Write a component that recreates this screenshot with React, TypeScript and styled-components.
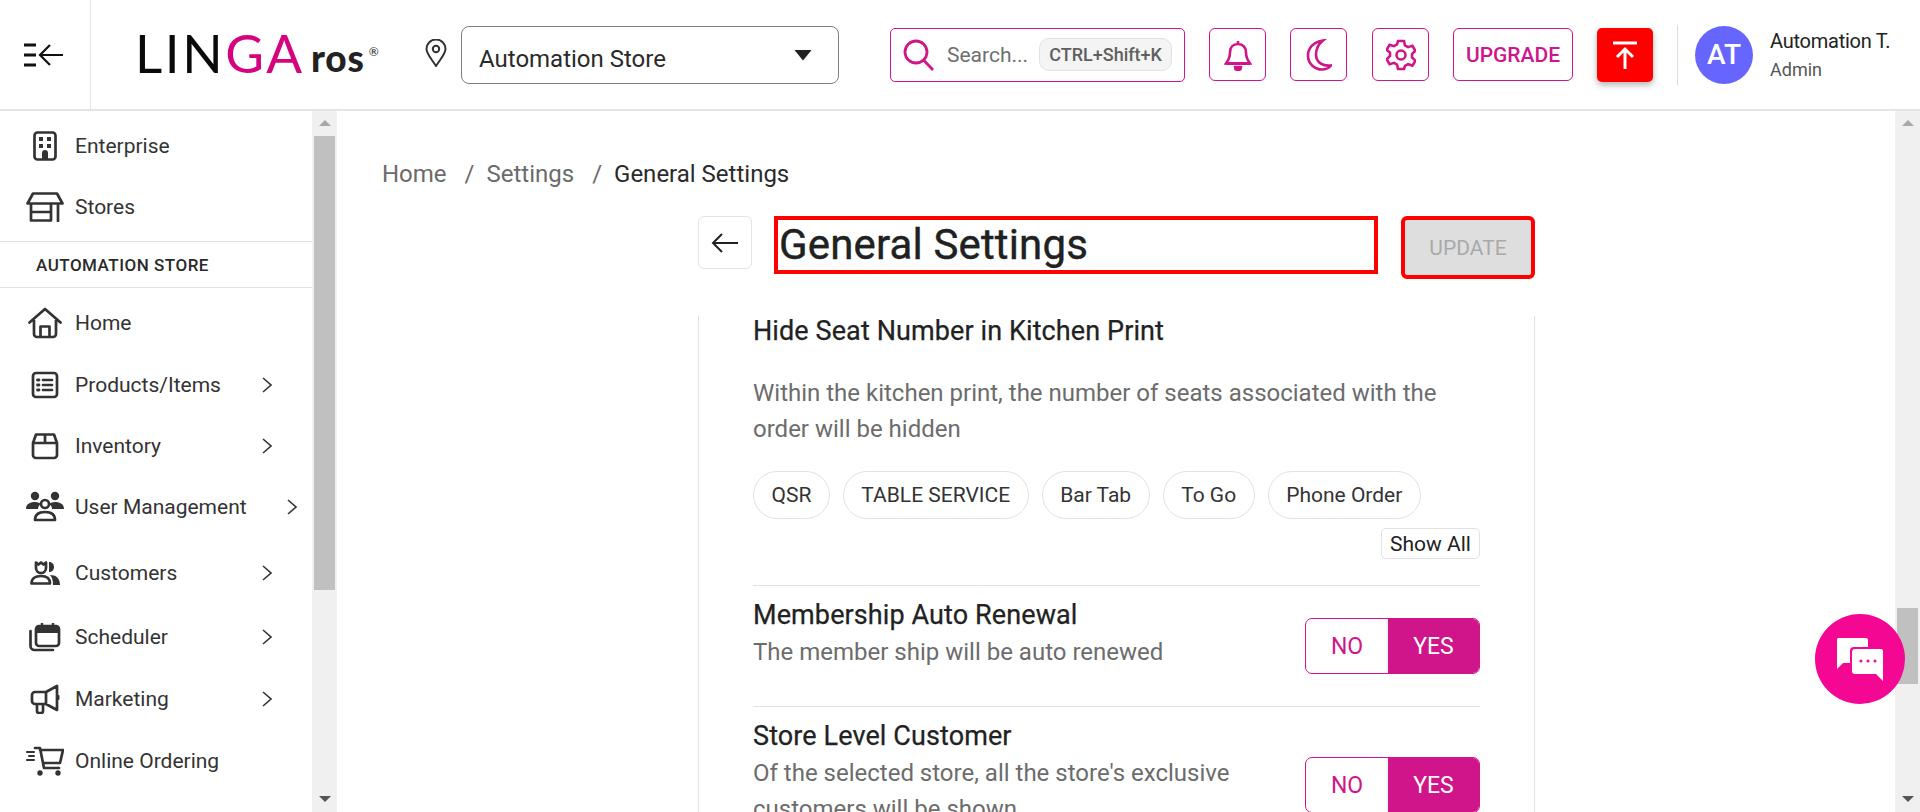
import React from "react";
import styled, { createGlobalStyle } from "styled-components";

const PINK = "#d0158a";
const INK = "#2a2a2a";

const Global = createGlobalStyle`
  html, body { margin: 0; padding: 0; height: 100%; overflow: hidden; background: #fff; }
  body { font-family: Roboto, "Liberation Sans", sans-serif; color: ${INK}; }
  * { box-sizing: border-box; }
`;

const Page = styled.div`
  width: 1920px;
  height: 812px;
  display: flex;
  flex-direction: column;
  overflow: hidden;
  position: relative;
`;

/* header */
const Header = styled.header`
  height: 111px;
  flex: none;
  display: flex;
  align-items: center;
  border-bottom: 2px solid #e4e4e4;
`;
const MenuCell = styled.div`
  width: 91px;
  height: 109px;
  flex: none;
  border-right: 1px solid #e4e4e4;
  display: flex;
  align-items: center;
  padding-left: 23px;
`;
const Logo = styled.div`
  width: 290px;
  margin-left: 44px;
  flex: none;
  display: flex;
  align-items: baseline;
  font-family: Lato, sans-serif;
  color: #0a0a0a;
  margin-top: -2px;
`;
const LogoMark = styled.span`
  font-size: 53px;
  font-weight: 400;
  letter-spacing: 2.6px;
  line-height: 1;
  width: 176px;
  b { font-weight: 400; color: #d6037f; }
`;
const LogoSuffix = styled.span`
  font-size: 37px;
  font-weight: 900;
  color: #222;
  letter-spacing: 0.8px;
  transform: translateY(-1px);
`;
const LogoMarkR = styled.sup`
  font-size: 12px;
  font-weight: 400;
  margin-left: 4px;
  vertical-align: 16px;
  line-height: 0;
`;
const PinSlot = styled.div`
  width: 36px;
  flex: none;
  display: flex;
  margin-top: -3px;
`;
const StoreSelect = styled.div`
  width: 378px;
  height: 58px;
  flex: none;
  border: 1px solid #7b7f88;
  border-radius: 8px;
  display: flex;
  align-items: center;
  justify-content: space-between;
  padding: 9px 26px 0 17px;
  font-size: 24px;
  margin-right: 51px;
`;
const Caret = styled.span`
  width: 18px;
  height: 11px;
  margin-top: -8px;
  background: #222;
  clip-path: polygon(0 0, 100% 0, 50% 100%);
`;
const SearchBox = styled.div`
  width: 295px;
  height: 54px;
  flex: none;
  border: 1px solid ${PINK};
  border-radius: 5px;
  display: flex;
  align-items: center;
  padding-left: 12px;
  margin-right: 24px;
`;
const SearchText = styled.span`
  font-size: 21px;
  color: #6f6f6f;
  margin-left: 12px;
`;
const Kbd = styled.span`
  margin-left: 11px;
  height: 33px;
  width: 133px;
  flex: none;
  border-radius: 10px;
  border: 1px solid #e2e2e2;
  background: #f4f4f4;
  font-size: 18px;
  font-weight: 500;
  color: #5f5f5f;
  display: flex;
  align-items: center;
  justify-content: center;
`;
const IconButton = styled.div<{ $gap?: number }>`
  width: 57px;
  height: 53px;
  flex: none;
  border: 1px solid ${PINK};
  border-radius: 6px;
  display: flex;
  align-items: center;
  justify-content: center;
  margin-right: ${p => p.$gap ?? 24}px;
`;
const UpgradeButton = styled(IconButton)`
  width: 120px;
  font-size: 21px;
  font-weight: 500;
  color: ${PINK};
`;
const RedButton = styled.div`
  width: 56px;
  height: 54px;
  flex: none;
  background: #ff0000;
  border-radius: 5px;
  box-shadow: 0 3px 6px rgba(0, 0, 0, 0.3);
  display: flex;
  align-items: center;
  justify-content: center;
`;
const VSep = styled.div`
  width: 1px;
  height: 60px;
  flex: none;
  background: #dcdcdc;
  margin: 0 17px 0 24px;
`;
const Avatar = styled.div`
  width: 58px;
  height: 58px;
  flex: none;
  border-radius: 50%;
  background: #6666ff;
  color: #fff;
  font-size: 28px;
  font-weight: 500;
  display: flex;
  align-items: center;
  justify-content: center;
`;
const UserInfo = styled.div`
  margin-left: 17px;
  display: flex;
  flex-direction: column;
  gap: 6px;
`;
const UserName = styled.span`
  font-size: 20px;
  line-height: 24px;
  color: #222;
  letter-spacing: -0.25px;
`;
const UserRole = styled.span`
  font-size: 18px;
  line-height: 22px;
  color: #555;
`;

/* body */
const Body = styled.div`
  flex: 1;
  min-height: 0;
  display: flex;
`;
const Sidebar = styled.aside`
  width: 337px;
  flex: none;
  display: flex;
  border-right: 1px solid #e4e4e4;
`;
const SideList = styled.nav`
  width: 312px;
  flex: none;
  padding-top: 5px;
  overflow: hidden;
`;
const SideRow = styled.div<{ $h: number }>`
  height: ${p => p.$h}px;
  display: flex;
  align-items: center;
  padding-left: 26px;
  font-size: 21px;
  color: #333;
`;
const SideIcon = styled.span`
  width: 38px;
  height: 32px;
  margin-right: 11px;
  display: flex;
  align-items: center;
  justify-content: center;
  flex: none;
`;
const SideLabel = styled.span<{ $w?: number }>`
  min-width: ${p => p.$w ?? 187}px;
`;
const StoreHeading = styled.div`
  height: 47px;
  margin-top: 4px;
  border-top: 1px solid #e2e2e2;
  border-bottom: 1px solid #e2e2e2;
  padding-left: 36px;
  display: flex;
  align-items: center;
  font-size: 17px;
  font-weight: 500;
  color: #2a2a2a;
  letter-spacing: 0.5px;
`;
const Track = styled.div`
  width: 25px;
  flex: none;
  background: #f0f0f0;
  display: flex;
  flex-direction: column;
  align-items: center;
  position: relative;
`;
const ArrowUp = styled.span`
  margin-top: 9px;
  width: 0;
  height: 0;
  border-left: 6px solid transparent;
  border-right: 6px solid transparent;
  border-bottom: 6px solid #a8a8a8;
`;
const ArrowDown = styled.span`
  margin-top: auto;
  margin-bottom: 10px;
  width: 0;
  height: 0;
  border-left: 6px solid transparent;
  border-right: 6px solid transparent;
  border-top: 6px solid #555;
`;
const Thumb = styled.div<{ $top: number; $h: number }>`
  width: 21px;
  height: ${p => p.$h}px;
  margin-top: ${p => p.$top}px;
  background: #c0c0c0;
`;

const Main = styled.main`
  flex: 1;
  min-width: 0;
  overflow: hidden;
  display: flex;
  flex-direction: column;
`;
const Crumbs = styled.div`
  margin: 48px 0 0 45px;
  height: 30px;
  display: flex;
  align-items: center;
  font-size: 24px;
  color: #6b6b6b;
  flex: none;
`;
const CrumbSep = styled.span`
  margin: 0 12px 0 18px;
`;
const CrumbCurrent = styled.span`
  color: #2a2a2a;
`;
const Column = styled.div`
  width: 837px;
  margin: 27px 0 0 361px;
  flex: none;
`;
const TitleRow = styled.div`
  display: flex;
  align-items: flex-start;
`;
const BackButton = styled.div`
  width: 54px;
  height: 53px;
  flex: none;
  border: 1px solid #e4e4e4;
  border-radius: 6px;
  display: flex;
  align-items: center;
  justify-content: center;
  margin-right: 22px;
`;
const TitleBox = styled.h1`
  width: 604px;
  height: 58px;
  margin: 0 23px 0 0;
  border: 4px solid #ff0000;
  padding: 0 0 0 1px;
  font-size: 42px;
  font-weight: 400;
  letter-spacing: 0.15px;
  line-height: 50px;
  color: #212121;
  -webkit-text-stroke: 0.4px #212121;
`;
const UpdateButton = styled.button`
  width: 134px;
  height: 63px;
  flex: none;
  border: 4px solid #ff0000;
  border-radius: 6px;
  background: #dedede;
  color: #a9a9a9;
  font: 400 21px Roboto, sans-serif;
`;
const Card = styled.section`
  margin-top: 37px;
  padding: 0 54px;
  border-left: 1px solid #e2e2e2;
  border-right: 1px solid #e2e2e2;
`;
const SettingTitle = styled.div`
  font-size: 27px;
  line-height: 30px;
  font-weight: 400;
  color: #222;
  letter-spacing: 0.1px;
  -webkit-text-stroke: 0.25px #222;
`;
const SettingDesc = styled.div`
  font-size: 24px;
  line-height: 36px;
  color: #6c6c6c;
`;
const HideDesc = styled(SettingDesc)`
  margin-top: 29px;
`;
const Chips = styled.div`
  display: flex;
  gap: 13px;
  margin-top: 24px;
`;
const Chip = styled.span`
  height: 48px;
  padding: 0 17.5px;
  border: 1px solid #e2e2e2;
  border-radius: 24px;
  display: flex;
  align-items: center;
  font-size: 21px;
  color: #333;
`;
const ShowAllRow = styled.div`
  display: flex;
  justify-content: flex-end;
  margin-top: 9px;
`;
const ShowAll = styled.span`
  height: 31px;
  width: 99px;
  border: 1px solid #e2e2e2;
  border-radius: 5px;
  font-size: 21px;
  color: #222;
  display: flex;
  align-items: center;
  justify-content: center;
`;
const SettingRow = styled.div<{ $h: number; $pad: number; $top?: number }>`
  height: ${p => p.$h}px;
  padding-top: ${p => p.$pad}px;
  margin-top: ${p => p.$top ?? 0}px;
  border-top: 1px solid #e0e2e8;
  display: flex;
  justify-content: space-between;
  align-items: flex-start;
`;
const SettingText = styled.div`
  width: 490px;
`;
const RowDesc = styled(SettingDesc)`
  margin-top: 4px;
`;
const Toggle = styled.div<{ $top: number }>`
  width: 175px;
  height: 56px;
  margin-top: ${p => p.$top}px;
  flex: none;
  border: 1px solid ${PINK};
  border-radius: 7px;
  overflow: hidden;
  display: flex;
  font-size: 23px;
`;
const ToggleNo = styled.span`
  width: 82px;
  color: ${PINK};
  display: flex;
  align-items: center;
  justify-content: center;
  box-shadow: inset -4px 0 4px -4px rgba(0, 0, 0, 0.12);
`;
const ToggleYes = styled.span`
  flex: 1;
  background: ${PINK};
  color: #fff;
  display: flex;
  align-items: center;
  justify-content: center;
`;
const ChatBubble = styled.div`
  position: absolute;
  left: 1815px;
  top: 614px;
  width: 90px;
  height: 90px;
  border-radius: 50%;
  background: #f40792;
  display: flex;
  align-items: center;
  justify-content: center;
`;

const stroke = { fill: "none", stroke: "#333", strokeWidth: 2.7, strokeLinecap: "round", strokeLinejoin: "round" } as const;

const Chevron = () => (
  <svg width="10" height="16" viewBox="0 0 10 16"><path d="M1 1l8 7-8 7" fill="none" stroke="#333" strokeWidth="1.6" /></svg>
);

const items: { label: string; h: number; arrow?: boolean; w?: number; icon: React.ReactNode }[] = [
  {
    label: "Home", h: 70,
    icon: <svg width="34" height="32" viewBox="0 0 34 32"><path {...stroke} d="M1.500 15.500L17 2l15.500 13.500M6 13v14a3 3 0 0 0 3 3h16a3 3 0 0 0 3-3V13M12.500 30V19.500h9V30" /></svg>,
  },
  {
    label: "Products/Items", h: 54, arrow: true,
    icon: <svg width="28" height="28" viewBox="0 0 28 28"><rect {...stroke} x="2" y="2" width="24" height="24" rx="3" /><path {...stroke} d="M12 9h9M12 14h9M12 19h9" /><path d="M6.500 9h1.500M6.500 14h1.500M6.500 19h1.500" stroke="#333" strokeWidth="2.800" strokeLinecap="round" /></svg>,
  },
  {
    label: "Inventory", h: 68, arrow: true,
    icon: <svg width="28" height="28" viewBox="0 0 28 28"><path {...stroke} d="M2 11L5 2.500h18L26 11v12a3 3 0 0 1-3 3H5a3 3 0 0 1-3-3zM2 11h24M14 2.500V11" /></svg>,
  },
  {
    label: "User Management", h: 53, arrow: true, w: 212,
    icon: <svg width="38" height="32" viewBox="0 0 38 32"><circle cx="9" cy="5" r="4.200" fill="#333" /><circle cx="29" cy="5" r="4.200" fill="#333" /><path fill="#333" d="M0 18c0-5 4-7 9-7 3 0 5 1 6 2-2 1-3 3-3 5zM38 18c0-5-4-7-9-7-3 0-5 1-6 2 2 1 3 3 3 5z" /><circle {...stroke} cx="19" cy="13" r="4" /><path {...stroke} d="M9 29c0-6 4-8 10-8s10 2 10 8z" /></svg>,
  },
  {
    label: "Customers", h: 80, arrow: true,
    icon: <svg width="30" height="24" viewBox="0 0 30 24"><path {...stroke} d="M6 1.500l2.500 2L11 1.500l2.500 2L16 1.500V7a5 5 0 0 1-10 0zM1.500 22.500c0-5 4-7.500 9.500-7.500s9 2.500 9 7.500z" /><path fill="#333" d="M19 1c3 0 5 2 5 5s-2 5-5 5zM20 14c6 0 10 3 10 10h-7c0-5-1-8-3-10z" /></svg>,
  },
  {
    label: "Scheduler", h: 47, arrow: true,
    icon: <svg width="32" height="30" viewBox="0 0 32 30"><path {...stroke} d="M1.500 9v15a4 4 0 0 0 4 4H24" /><rect {...stroke} x="7" y="4" width="23" height="20" rx="3" /><path d="M7 4h23v7H7z" fill="#333" /><path d="M13 1v4M24 1v4" stroke="#333" strokeWidth="2.400" /></svg>,
  },
  {
    label: "Marketing", h: 77, arrow: true,
    icon: <svg width="32" height="30" viewBox="0 0 30 30"><path {...stroke} d="M27 2v24L16 20H5a3 3 0 0 1-3-3v-6a3 3 0 0 1 3-3h11zM16 8v12M7 20v7a2 2 0 0 0 2 2h2a2 2 0 0 0 2-2v-7" /><path d="M27 11h1.500a1 1 0 0 1 1 1v3a1 1 0 0 1-1 1H27z" fill="#333" /></svg>,
  },
  {
    label: "Online Ordering", h: 47,
    icon: <svg width="38" height="30" viewBox="0 0 38 30"><path {...stroke} d="M9 2h5l4 20h15M14 4h23l-3 13H17" /><path {...stroke} d="M1 6h7M3 10h5M1 14h7" strokeWidth="2" /><circle cx="14" cy="27" r="2.700" fill="#333" /><circle cx="32" cy="27" r="2.700" fill="#333" /></svg>,
  },
];

export default function App() {
  return (
    <Page>
      <Global />
      <Header>
        <MenuCell>
          <svg width="42" height="26" viewBox="0 0 42 26">
            <path d="M1 3h12M1 13h12M1 23h12" stroke="#111" strokeWidth="2.800" />
            <path d="M40 13H18M27 3L17 13l10 10" fill="none" stroke="#111" strokeWidth="2.200" />
          </svg>
        </MenuCell>
        <Logo>
          <LogoMark>LIN<b>GA</b></LogoMark>
          <LogoSuffix>ros<LogoMarkR>®</LogoMarkR></LogoSuffix>
        </Logo>
        <PinSlot>
          <svg width="22" height="28" viewBox="0 0 22 28"><path d="M11 27C5 18 1.500 14.500 1.500 10a9.500 9.500 0 0 1 19 0c0 4.500-3.500 8-9.500 17z" fill="none" stroke="#333" strokeWidth="2" /><circle cx="11" cy="10" r="3.200" fill="none" stroke="#333" strokeWidth="2" /></svg>
        </PinSlot>
        <StoreSelect>Automation Store<Caret /></StoreSelect>
        <SearchBox>
          <svg width="32" height="32" viewBox="0 0 32 32"><circle cx="13" cy="13" r="11" fill="none" stroke={PINK} strokeWidth="2.800" /><path d="M20.500 21L30 31" stroke={PINK} strokeWidth="2.800" /></svg>
          <SearchText>Search...</SearchText>
          <Kbd>CTRL+Shift+K</Kbd>
        </SearchBox>
        <IconButton>
          <svg width="28" height="32" viewBox="0 0 28 32" fill="none" stroke={PINK} strokeWidth="2.600"><path d="M14 2v3M14 5c-5 0-8 3.500-8 8.500 0 5-1 7-4 11h24c-3-4-4-6-4-11C22 8.500 19 5 14 5z" /><path d="M2 24.500h24" strokeWidth="3" /><path d="M11 28c0 2 1.500 3 3 3s3-1 3-3z" fill={PINK} /></svg>
        </IconButton>
        <IconButton $gap={25}>
          <svg width="26" height="32" viewBox="0 0 26 32" fill="none" stroke={PINK} strokeWidth="2.600"><path d="M17 1.500C7 3 2 9.500 2 16.500 2 25 9 30.500 16 30.500c4 0 7-1.500 9-4-8 1-15-3-15-11 0-5.500 2.500-10.500 7-14z" /></svg>
        </IconButton>
        <IconButton>
          <svg width="30" height="32" viewBox="0 0 30 32" fill="none" stroke={PINK} strokeWidth="2.600"><path d="M12 2h6l1 4.500 3 1.700 4.400-1.400 3 5-3.400 3.200v3.400l3.400 3.200-3 5-4.400-1.400-3 1.700L18 30h-6l-1-4.500-3-1.700-4.400 1.400-3-5L4 17v-3.400L.6 10.800l3-5L8 7.200l3-1.700z" /><circle cx="15" cy="16" r="4.500" /></svg>
        </IconButton>
        <UpgradeButton>UPGRADE</UpgradeButton>
        <RedButton>
          <svg width="26" height="28" viewBox="0 0 26 28" fill="none" stroke="#fff" strokeWidth="3"><path d="M1 2h24M13 28V9M5 16l8-8 8 8" /></svg>
        </RedButton>
        <VSep />
        <Avatar>AT</Avatar>
        <UserInfo>
          <UserName>Automation T.</UserName>
          <UserRole>Admin</UserRole>
        </UserInfo>
      </Header>
      <Body>
        <Sidebar>
          <SideList>
            <SideRow $h={60}>
              <SideIcon>
                <svg width="24" height="30" viewBox="0 0 24 30"><rect {...stroke} x="1.500" y="1.500" width="21" height="27" rx="3" /><path fill="#333" d="M6 6h4v4H6zM14 6h4v4h-4zM6 13h4v4H6zM14 13h4v4h-4zM9 22a3 3 0 0 1 6 0v6H9z" /></svg>
              </SideIcon>
              <SideLabel>Enterprise</SideLabel>
            </SideRow>
            <SideRow $h={61}>
              <SideIcon>
                <svg width="38" height="30" viewBox="0 0 38 30"><path {...stroke} d="M7 1.500h24l5.500 10H1.500zM5 12v16.500h20V12M5 20h20M32 12v17" /></svg>
              </SideIcon>
              <SideLabel>Stores</SideLabel>
            </SideRow>
            <StoreHeading>AUTOMATION STORE</StoreHeading>
            {items.map(it => (
              <SideRow key={it.label} $h={it.h}>
                <SideIcon>{it.icon}</SideIcon>
                <SideLabel $w={it.w}>{it.label}</SideLabel>
                {it.arrow && <Chevron />}
              </SideRow>
            ))}
          </SideList>
          <Track>
            <ArrowUp />
            <Thumb $top={10} $h={454} />
            <ArrowDown />
          </Track>
        </Sidebar>
        <Main>
          <Crumbs>
            Home<CrumbSep>/</CrumbSep>Settings<CrumbSep>/</CrumbSep><CrumbCurrent>General Settings</CrumbCurrent>
          </Crumbs>
          <Column>
            <TitleRow>
              <BackButton>
                <svg width="28" height="22" viewBox="0 0 28 22" fill="none" stroke="#222" strokeWidth="2"><path d="M27 11H2M11 2l-9 9 9 9" /></svg>
              </BackButton>
              <TitleBox>General Settings</TitleBox>
              <UpdateButton>UPDATE</UpdateButton>
            </TitleRow>
            <Card>
              <SettingTitle>Hide Seat Number in Kitchen Print</SettingTitle>
              <HideDesc>Within the kitchen print, the number of seats associated with the order will be hidden</HideDesc>
              <Chips>
                <Chip>QSR</Chip>
                <Chip>TABLE SERVICE</Chip>
                <Chip>Bar Tab</Chip>
                <Chip>To Go</Chip>
                <Chip>Phone Order</Chip>
              </Chips>
              <ShowAllRow><ShowAll>Show All</ShowAll></ShowAllRow>
              <SettingRow $h={121} $pad={14} $top={26}>
                <SettingText>
                  <SettingTitle>Membership Auto Renewal</SettingTitle>
                  <RowDesc>The member ship will be auto renewed</RowDesc>
                </SettingText>
                <Toggle $top={18}><ToggleNo>NO</ToggleNo><ToggleYes>YES</ToggleYes></Toggle>
              </SettingRow>
              <SettingRow $h={140} $pad={14}>
                <SettingText>
                  <SettingTitle>Store Level Customer</SettingTitle>
                  <RowDesc>Of the selected store, all the store's exclusive customers will be shown</RowDesc>
                </SettingText>
                <Toggle $top={36}><ToggleNo>NO</ToggleNo><ToggleYes>YES</ToggleYes></Toggle>
              </SettingRow>
            </Card>
          </Column>
        </Main>
        <Track>
          <ArrowUp />
          <Thumb $top={482} $h={76} />
          <ArrowDown />
        </Track>
      </Body>
      <ChatBubble>
        <svg width="48" height="44" viewBox="0 0 48 44">
          <path fill="#fff" d="M2 1h28a2 2 0 0 1 2 2v7H18a4 4 0 0 0-4 4v12H7l-6 6V3a2 2 0 0 1 1-2z" />
          <path fill="#fff" d="M19 12h26a2 2 0 0 1 2 2v30l-7-7H19a3 3 0 0 1-3-3V15a3 3 0 0 1 3-3z" />
          <circle cx="25" cy="24" r="1.500" fill="#f40792" /><circle cx="32" cy="24" r="1.500" fill="#f40792" /><circle cx="39" cy="24" r="1.500" fill="#f40792" />
        </svg>
      </ChatBubble>
    </Page>
  );
}
